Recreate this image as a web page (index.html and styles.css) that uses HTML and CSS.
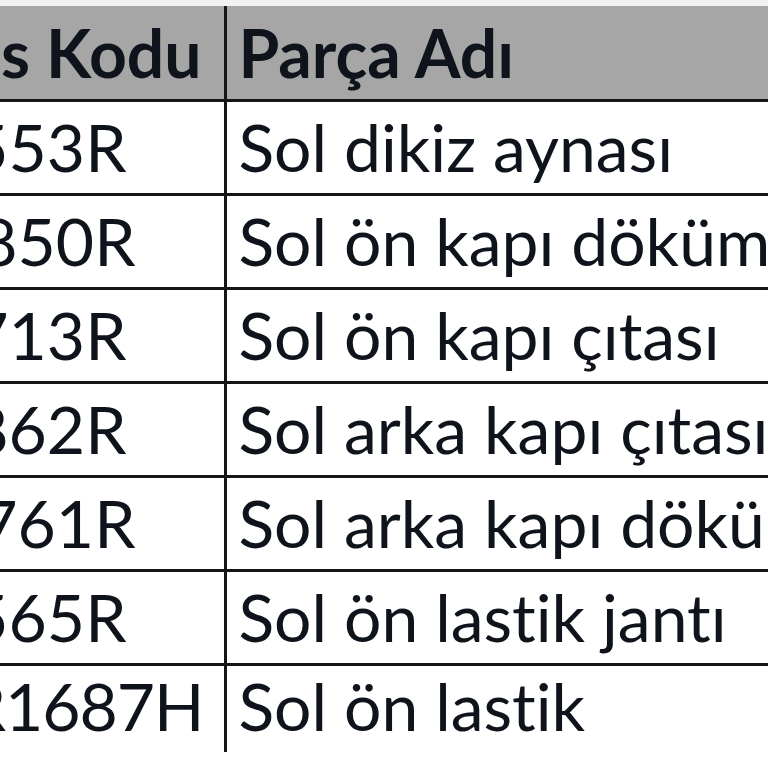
FILE: index.html
```html
<!DOCTYPE html>
<html lang="tr">
<head>
<meta charset="utf-8">
<title>Parça Listesi</title>
<link rel="stylesheet" href="styles.css">
</head>
<body>
<div class="sheet">
  <table class="grid">
    <colgroup><col class="col-code"><col class="col-name"></colgroup>
    <thead>
      <tr><th class="code">Referans Kodu</th><th class="name">Parça Adı</th></tr>
    </thead>
    <tbody>
      <tr><td class="code code-num">963025553R</td><td class="name">Sol dikiz aynası</td></tr>
      <tr><td class="code code-num code-wide">808210850R</td><td class="name">Sol ön kapı döküm bandı</td></tr>
      <tr><td class="code code-num">808210713R</td><td class="name">Sol ön kapı çıtası</td></tr>
      <tr><td class="code code-num">828210862R</td><td class="name">Sol arka kapı çıtası</td></tr>
      <tr><td class="code code-num code-wide">828210761R</td><td class="name">Sol arka kapı döküm bandı</td></tr>
      <tr><td class="code code-num">403002565R</td><td class="name">Sol ön lastik jantı</td></tr>
      <tr class="last"><td class="code code-tire">205/55R1687H</td><td class="name">Sol ön lastik</td></tr>
    </tbody>
  </table>
</div>
</body>
</html>
```
FILE: styles.css
```css
html, body {
  margin: 0;
  background: #ffffff;
}

.sheet {
  width: 768px;
  height: 768px;
  overflow: hidden;
  padding-top: 6px;
  box-sizing: border-box;
  background: linear-gradient(#f2f2f2 0 6px, #ffffff 6px);
  font-family: Lato, "Noto Sans", sans-serif;
  font-variant-ligatures: none;
  color: #0f141c;
}

.grid {
  border-collapse: collapse;
  table-layout: fixed;
  width: 1525px;
  margin-left: -300px;
}

.col-code { width: 525px; }
.col-name { width: 1000px; }

.grid th,
.grid td {
  height: 94px;
  padding: 0 0 13px 0;
  box-sizing: border-box;
  vertical-align: bottom;
  font-size: 66px;
  line-height: 66px;
  text-align: left;
  white-space: nowrap;
  overflow: hidden;
  border-bottom: 3px solid #161616;
}

.grid th {
  background: #a6a6a6;
  font-weight: 700;
}

.grid .code {
  text-align: right;
  padding-right: 22px;
  border-right: 3px solid #161616;
}

.grid .code-num {
  padding-right: 97px;
}

.grid .code-wide {
  padding-right: 88px;
}

.grid .code-tire {
  padding-right: 20px;
  letter-spacing: -1px;
}

.grid .name {
  padding-left: 12px;
}

.grid .last td {
  border-bottom: none;
  height: 88px;
}
```
